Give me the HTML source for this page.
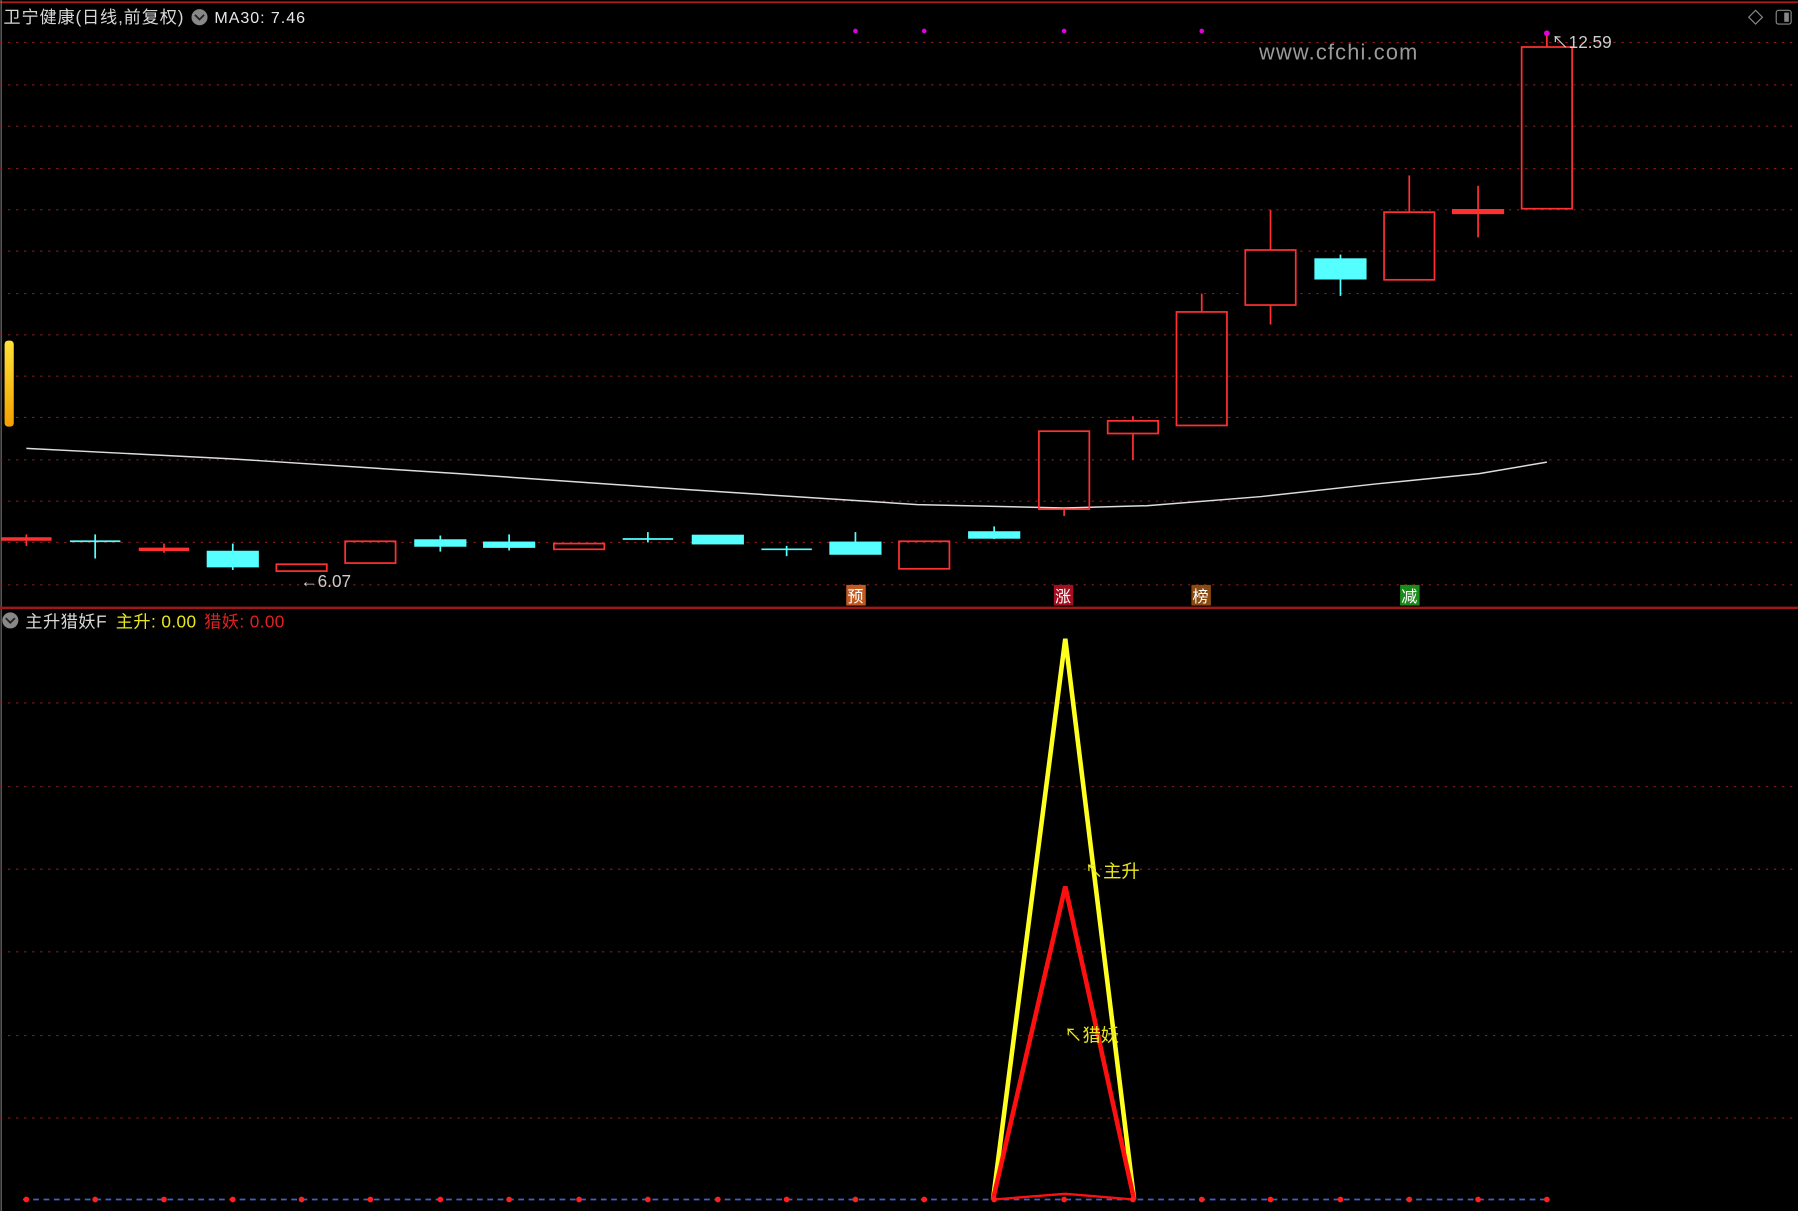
<!DOCTYPE html>
<html><head><meta charset="utf-8"><style>
html,body{margin:0;padding:0;background:#000;width:1798px;height:1211px;overflow:hidden}
svg{display:block}
text{font-family:"Liberation Sans","Noto Sans CJK SC",sans-serif}
</style></head><body>
<svg width="1798" height="1211" viewBox="0 0 1568 1056" preserveAspectRatio="none" xmlns="http://www.w3.org/2000/svg">
<defs><linearGradient id="g" x1="0" y1="0" x2="0" y2="1"><stop offset="0" stop-color="#ffe23a"/><stop offset="1" stop-color="#f2a000"/></linearGradient></defs>
<rect width="1568" height="1056" fill="#000"/>
<line x1="0" y1="2" x2="1568" y2="2" stroke="#b01818" stroke-width="1.5"/>
<line x1="1" y1="0" x2="1" y2="1056" stroke="#777" stroke-width="1"/>
<g stroke="#8a1a1a" stroke-width="1" stroke-dasharray="2,5">
<line x1="0" y1="37" x2="1568" y2="37"/><line x1="0" y1="74" x2="1568" y2="74"/><line x1="0" y1="110" x2="1568" y2="110"/><line x1="0" y1="147" x2="1568" y2="147"/><line x1="0" y1="183" x2="1568" y2="183"/><line x1="0" y1="219" x2="1568" y2="219"/><line x1="0" y1="256" x2="1568" y2="256"/><line x1="0" y1="292" x2="1568" y2="292"/><line x1="0" y1="328" x2="1568" y2="328"/><line x1="0" y1="364" x2="1568" y2="364"/><line x1="0" y1="401" x2="1568" y2="401"/><line x1="0" y1="437" x2="1568" y2="437"/><line x1="0" y1="473" x2="1568" y2="473"/><line x1="0" y1="510" x2="1568" y2="510"/>
<line x1="0" y1="613" x2="1568" y2="613"/><line x1="0" y1="686" x2="1568" y2="686"/><line x1="0" y1="758" x2="1568" y2="758"/><line x1="0" y1="830" x2="1568" y2="830"/><line x1="0" y1="903" x2="1568" y2="903"/><line x1="0" y1="975" x2="1568" y2="975"/>
</g>
<line x1="0" y1="530" x2="1568" y2="530" stroke="#a01818" stroke-width="2"/>
<text x="3" y="20" fill="#d8d8d8" font-size="15" textLength="157">卫宁健康(日线,前复权)</text>
<circle cx="174" cy="15" r="7" fill="#888"/><path d="M170 13l4 4 4-4" stroke="#222" stroke-width="1.6" fill="none"/>
<text x="187" y="20" fill="#e8e8e8" font-size="14" textLength="79">MA30: 7.46</text>
<text x="1098" y="52" fill="#9a9a9a" font-size="19" textLength="138">www.cfchi.com</text>
<path d="M1531 9l6 6-6 6-6-6z" stroke="#888" fill="none"/>
<rect x="1549" y="9" width="13" height="12" rx="2" stroke="#888" fill="none"/><rect x="1556" y="11" width="4" height="8" fill="#888"/>
<rect x="4" y="297" width="8" height="75" rx="3" fill="url(#g)"/>
<g fill="#e000e0"><circle cx="746" cy="27" r="2"/><circle cx="806" cy="27" r="2"/><circle cx="928" cy="27" r="2"/><circle cx="1048" cy="27" r="2"/><circle cx="1349" cy="29" r="2.5"/></g>
<polyline fill="none" stroke="#ddd" stroke-width="1.3" points="23,391 200,400 400,413 600,427 800,440 928,443 1000,441 1100,433 1200,422 1290,413 1349,403"/>
<g stroke="#ff3030" stroke-width="1.5">
<line x1="23" y1="466" x2="23" y2="476"/><line x1="1" y1="470" x2="45" y2="470" stroke-width="3"/>
<line x1="143" y1="474" x2="143" y2="482"/><line x1="121" y1="479" x2="165" y2="479" stroke-width="3"/>
</g>
<g stroke="#ff3030" stroke-width="1.5" fill="none">
<rect x="241" y="492" width="44" height="6"/>
<rect x="301" y="472" width="44" height="19"/>
<rect x="483" y="474" width="44" height="5"/>
<rect x="784" y="472" width="44" height="24"/>
<line x1="928" y1="444" x2="928" y2="450"/><rect x="906" y="376" width="44" height="68"/>
<line x1="988" y1="363" x2="988" y2="401"/><rect x="966" y="367" width="44" height="11" fill="#000"/>
<line x1="1048" y1="256" x2="1048" y2="272"/><rect x="1026" y="272" width="44" height="99"/>
<line x1="1108" y1="183" x2="1108" y2="283"/><rect x="1086" y="218" width="44" height="48" fill="#000"/>
<line x1="1229" y1="153" x2="1229" y2="185"/><rect x="1207" y="185" width="44" height="59"/>
<line x1="1289" y1="162" x2="1289" y2="207"/><rect x="1267" y="183" width="44" height="3" fill="#ff3030"/>
<line x1="1349" y1="31" x2="1349" y2="41"/><rect x="1327" y="41" width="44" height="141"/>
</g>
<g stroke="#55ffff" stroke-width="1.5" fill="#55ffff">
<line x1="83" y1="466" x2="83" y2="487"/><line x1="61" y1="472" x2="105" y2="472"/>
<line x1="203" y1="474" x2="203" y2="497"/><rect x="181" y="481" width="44" height="13"/>
<line x1="384" y1="467" x2="384" y2="481"/><rect x="362" y="471" width="44" height="5"/>
<line x1="444" y1="466" x2="444" y2="480"/><rect x="422" y="473" width="44" height="4"/>
<line x1="565" y1="464" x2="565" y2="473"/><line x1="543" y1="470" x2="587" y2="470"/>
<rect x="604" y="467" width="44" height="7"/>
<line x1="686" y1="476" x2="686" y2="485"/><line x1="664" y1="479" x2="708" y2="479"/>
<line x1="746" y1="464" x2="746" y2="483"/><rect x="724" y="473" width="44" height="10"/>
<line x1="867" y1="459" x2="867" y2="470"/><rect x="845" y="464" width="44" height="5"/>
<line x1="1169" y1="222" x2="1169" y2="258"/><rect x="1147" y="226" width="44" height="17"/>
</g>
<text x="262" y="512" fill="#ccc" font-size="15">←6.07</text>
<text x="1353" y="42" fill="#ccc" font-size="15">↖12.59</text>
<g font-size="14" fill="#fff">
<rect x="738" y="510" width="17" height="18" fill="#c05a20"/><text x="739" y="525">预</text>
<rect x="919" y="510" width="17" height="18" fill="#a01020"/><text x="920" y="525">涨</text>
<rect x="1039" y="510" width="17" height="18" fill="#8a4a10"/><text x="1040" y="525">榜</text>
<rect x="1221" y="510" width="17" height="18" fill="#1a8a1a"/><text x="1222" y="525">减</text>
</g>
<circle cx="9" cy="541" r="7" fill="#888"/><path d="M5 539l4 4 4-4" stroke="#222" stroke-width="1.6" fill="none"/>
<text x="22" y="547" fill="#d8d8d8" font-size="15" textLength="71">主升猎妖F</text>
<text x="101" y="547" fill="#e8e820" font-size="15" textLength="70">主升: 0.00</text>
<text x="178" y="547" fill="#e02020" font-size="15" textLength="70">猎妖: 0.00</text>
<line x1="20" y1="1046" x2="1352" y2="1046" stroke="#4060d0" stroke-width="1.5" stroke-dasharray="5,4"/>
<polyline points="866,1046 929,557 989,1046" fill="none" stroke="#ffff20" stroke-width="4"/>
<polyline points="866,1046 929,773 989,1046" fill="none" stroke="#ff1010" stroke-width="4"/>
<polyline points="866,1046 929,1041 989,1046" fill="none" stroke="#ff1010" stroke-width="2"/>
<g fill="#ff2020">
<circle cx="23" cy="1046" r="2.5"/><circle cx="83" cy="1046" r="2.5"/><circle cx="143" cy="1046" r="2.5"/><circle cx="203" cy="1046" r="2.5"/><circle cx="263" cy="1046" r="2.5"/><circle cx="323" cy="1046" r="2.5"/><circle cx="384" cy="1046" r="2.5"/><circle cx="444" cy="1046" r="2.5"/><circle cx="505" cy="1046" r="2.5"/><circle cx="565" cy="1046" r="2.5"/><circle cx="626" cy="1046" r="2.5"/><circle cx="686" cy="1046" r="2.5"/><circle cx="746" cy="1046" r="2.5"/><circle cx="806" cy="1046" r="2.5"/><circle cx="867" cy="1046" r="2.5"/><circle cx="928" cy="1046" r="2.5"/><circle cx="988" cy="1046" r="2.5"/><circle cx="1048" cy="1046" r="2.5"/><circle cx="1108" cy="1046" r="2.5"/><circle cx="1169" cy="1046" r="2.5"/><circle cx="1229" cy="1046" r="2.5"/><circle cx="1289" cy="1046" r="2.5"/><circle cx="1349" cy="1046" r="2.5"/>
</g>
<text x="946" y="765" fill="#e8e820" font-size="16">↖主升</text>
<text x="928" y="908" fill="#e8e820" font-size="16">↖猎妖</text>
</svg>
</body></html>
